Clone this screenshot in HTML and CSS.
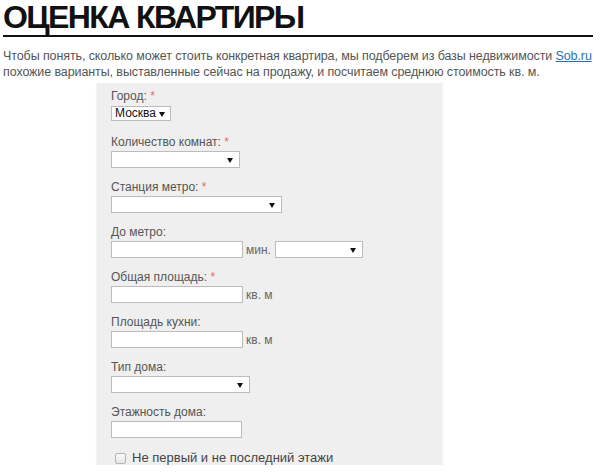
FILE: index.html
```html
<!DOCTYPE html>
<html lang="ru">
<head>
<meta charset="utf-8">
<title>Оценка квартиры</title>
<link rel="stylesheet" href="styles.css">
</head>
<body>
<div class="page">
  <h1 class="title">ОЦЕНКА КВАРТИРЫ</h1>
  <p class="intro">Чтобы понять, сколько может стоить конкретная квартира, мы подберем из базы недвижимости <a href="#" class="link">Sob.ru</a><br>похожие варианты, выставленные сейчас на продажу, и посчитаем среднюю стоимость кв. м.</p>
  <form class="panel">
    <div class="group group-city">
      <label class="label">Город: <span class="req">*</span></label>
      <div class="row">
        <span class="select select-city"><span class="select-text">Москва</span><span class="arrow"></span></span>
      </div>
    </div>
    <div class="group">
      <label class="label">Количество комнат: <span class="req">*</span></label>
      <div class="row">
        <span class="select w-rooms"><span class="arrow"></span></span>
      </div>
    </div>
    <div class="group">
      <label class="label">Станция метро: <span class="req">*</span></label>
      <div class="row">
        <span class="select w-metro"><span class="arrow"></span></span>
      </div>
    </div>
    <div class="group">
      <label class="label">До метро:</label>
      <div class="row">
        <span class="input w-input"></span>
        <span class="unit">мин.</span>
        <span class="select w-mode"><span class="arrow"></span></span>
      </div>
    </div>
    <div class="group">
      <label class="label">Общая площадь: <span class="req">*</span></label>
      <div class="row">
        <span class="input w-input"></span>
        <span class="unit">кв. м</span>
      </div>
    </div>
    <div class="group">
      <label class="label">Площадь кухни:</label>
      <div class="row">
        <span class="input w-input"></span>
        <span class="unit">кв. м</span>
      </div>
    </div>
    <div class="group">
      <label class="label">Тип дома:</label>
      <div class="row">
        <span class="select w-type"><span class="arrow"></span></span>
      </div>
    </div>
    <div class="group">
      <label class="label">Этажность дома:</label>
      <div class="row">
        <span class="input w-floors"></span>
      </div>
    </div>
    <div class="check-row">
      <span class="checkbox"></span>
      <span class="check-text">Не первый и не последний этажи</span>
    </div>
  </form>
</div>
</body>
</html>
```

FILE: styles.css
```css
html, body {
  margin: 0;
  padding: 0;
  background: #ffffff;
}

.page {
  padding: 0 0 0 3px;
  font-family: "Liberation Sans", Arial, sans-serif;
}

.title {
  margin: 0;
  width: 590px;
  font-size: 32px;
  line-height: 35px;
  font-weight: bold;
  letter-spacing: -1.6px;
  color: #111111;
  border-bottom: 2px solid #111111;
}

.intro {
  margin: 11px 0 0 0;
  font-size: 12.5px;
  line-height: 16px;
  color: #555555;
  letter-spacing: -0.1px;
  white-space: nowrap;
}

.link {
  color: #2c6fb5;
  text-decoration: underline;
}

.panel {
  margin: 3px 0 0 94px;
  width: 331px;
  padding: 6px 0 0 14px;
  background: #efefef;
  box-shadow: 0 1px 2px rgba(0, 0, 0, 0.12);
  display: flex;
  flex-direction: column;
  overflow: hidden;
}

.group {
  display: flex;
  flex-direction: column;
  margin-bottom: 12px;
}

.group-city {
  margin-bottom: 14px;
}

.label {
  font-size: 12px;
  line-height: 15px;
  color: #555555;
}

.req {
  color: #e36a6a;
}

.row {
  display: flex;
  align-items: center;
  margin-top: 1px;
  height: 17px;
}

.group-city .row {
  margin-top: 2px;
  height: 15px;
}

.select,
.input {
  box-sizing: border-box;
  height: 17px;
  background: #ffffff;
  border: 1px solid #bcbcbc;
  position: relative;
  display: flex;
  align-items: center;
}

.select-city {
  height: 15px;
  width: 60px;
  padding-left: 3px;
}

.select-text {
  font-size: 12px;
  line-height: 13px;
  color: #111111;
}

.arrow {
  position: absolute;
  right: 6px;
  top: 50%;
  margin-top: -2px;
  width: 0;
  height: 0;
  border-left: 3px solid transparent;
  border-right: 3px solid transparent;
  border-top: 5px solid #111111;
}

.select-city .arrow {
  right: 5px;
}

.w-rooms { width: 129px; }
.w-metro { width: 171px; }
.w-mode { width: 88px; }
.w-type { width: 139px; }
.w-input { width: 132px; }
.w-floors { width: 131px; }

.unit {
  font-size: 12px;
  color: #666666;
  margin: 0 4px 0 3px;
}

.check-row {
  display: flex;
  align-items: center;
  gap: 6px;
  margin-top: 1px;
  padding-left: 4px;
  height: 14px;
}

.checkbox {
  box-sizing: border-box;
  width: 11px;
  height: 11px;
  border: 1px solid #b5b5b5;
  border-radius: 2px;
  background: linear-gradient(#fafafa, #e6e6e6);
}

.check-text {
  font-size: 13px;
  line-height: 14px;
  color: #444444;
}
```
